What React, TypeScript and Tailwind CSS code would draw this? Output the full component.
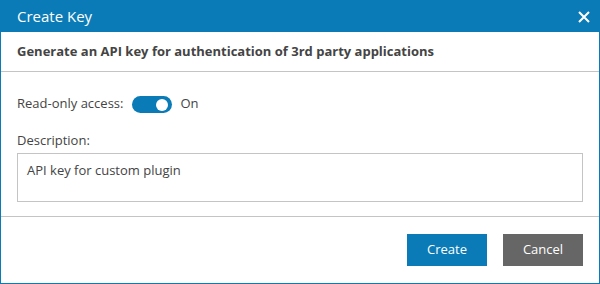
export default function App() {
  return (
    <div className="flex h-[284px] w-[600px] flex-col border border-t-0 border-[#0a7bb6] bg-white font-['Open_Sans',sans-serif] text-[13px] text-[#444]">
      {/* Header */}
      <div className="flex h-8 shrink-0 items-center justify-between bg-[#0a7bb6] pl-4 pr-[9px] text-white">
        <span className="text-[15px]">Create Key</span>
        <svg width="12" height="12" viewBox="0 0 12 12" className="mt-px">
          <path d="M1 1 L11 11 M11 1 L1 11" stroke="white" strokeWidth="2" />
        </svg>
      </div>

      {/* Subheader */}
      <div className="flex h-10 shrink-0 items-center border-b border-[#c4c4c4] px-4 font-bold text-[#444]">
        Generate an API key for authentication of 3rd party applications
      </div>

      {/* Body */}
      <div className="flex h-[145px] shrink-0 flex-col border-b border-[#c4c4c4] px-4 pt-[22px]">
        <div className="flex items-center gap-2">
          <span>Read-only access:</span>
          <div className="ml-px mt-[2px] flex h-[17px] w-10 items-center justify-end rounded-full bg-[#0a7bb6] pr-[4px]">
            <div className="h-3 w-3 rounded-full bg-white" />
          </div>
          <span>On</span>
        </div>
        <div className="mt-[17px]">Description:</div>
        <div className="mt-[3px] h-[49px] border border-[#c4c4c4] px-[9px] pt-[7px]">
          API key for custom plugin
        </div>
      </div>

      {/* Footer */}
      <div className="flex flex-1 items-start justify-end gap-4 px-4 pt-[17px]">
        <button className="h-8 w-20 bg-[#0a7bb6] text-white">Create</button>
        <button className="h-8 w-20 bg-[#666] text-white">Cancel</button>
      </div>
    </div>
  );
}
